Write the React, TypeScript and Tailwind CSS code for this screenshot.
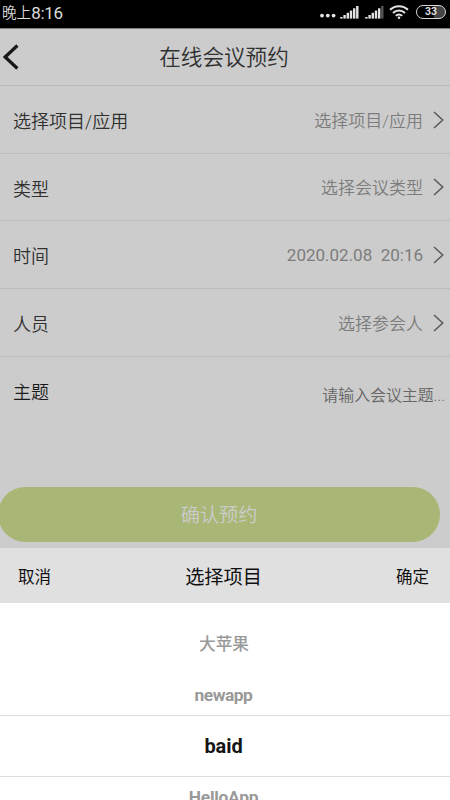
import React from 'react';

interface FieldRow {
    label: string;
    value: string;
    height: string;
}

const rows: FieldRow[] = [
    { label: '选择项目/应用', value: '选择项目/应用', height: 'h-[68px]' },
    { label: '类型', value: '选择会议类型', height: 'h-[67px]' },
    { label: '时间', value: '2020.02.08\u00a0 20:16', height: 'h-[68px]' },
    { label: '人员', value: '选择参会人', height: 'h-[68px]' },
];

const Signal: React.FC<{ weak?: boolean }> = ({ weak = false }) => (
    <svg width="19" height="14" viewBox="0 0 19 14" fill="#e4e4e4">
        <rect x="0.2" y="12" width="2.4" height="1.6" />
        <rect x="3.4" y="10" width="2.4" height="3.6" />
        <rect x="6.6" y="7.8" width="2.4" height="5.8" />
        <rect x="9.8" y="5.6" width="2.4" height="8" />
        <rect x="13" y="3.3" width="2.4" height="10.3" />
        <rect x="16.1" y="1" width="2.4" height="12.6" fill={weak ? '#555555' : '#e4e4e4'} />
    </svg>
);

const StatusBar: React.FC = () => (
    <div className="h-7 shrink-0 bg-black flex items-center justify-between pl-[2px] pr-[4px] text-[#dcdcdc]">
        <span className="text-[14.6px] leading-none pb-[2px] flex items-center font-[350]">
            晚上<span className="text-[17px] tracking-[-0.3px] font-normal">8:16</span>
        </span>
        <div className="flex items-center pb-[4px]">
            <svg width="16" height="14" viewBox="0 0 16 14" fill="#e4e4e4">
                <circle cx="2" cy="10.6" r="1.9" />
                <circle cx="7.8" cy="10.6" r="1.9" />
                <circle cx="13.6" cy="10.6" r="1.9" />
            </svg>
            <span className="ml-[4px]"><Signal /></span>
            <span className="ml-[6px]"><Signal weak /></span>
            <svg className="ml-[5px]" width="20" height="14" viewBox="0 0 20 14" fill="none" stroke="#e4e4e4" strokeWidth="2">
                <path d="M1 4.8a13 13 0 0 1 18 0" />
                <path d="M4 8a8.6 8.6 0 0 1 12 0" />
                <path d="M6.8 10.9a4.6 4.6 0 0 1 6.4 0" />
                <circle cx="10" cy="12.7" r="1.3" fill="#e4e4e4" stroke="none" />
            </svg>
            <div className="ml-[7px] w-[30px] h-[14px] rounded-full border-[1.5px] border-[#d8d8d8] bg-[linear-gradient(90deg,#000_62%,#454545_62%)] flex items-center justify-center pt-px text-[10.5px] leading-none font-bold">
                33
            </div>
        </div>
    </div>
);

const Chevron: React.FC = () => (
    <svg className="shrink-0" width="11" height="18" viewBox="0 0 11 18" fill="none" stroke="#5c5c5c" strokeWidth="1.6">
        <path d="M1 1l8.7 8L1 17" />
    </svg>
);

export default function App() {
    return (
        <div className="w-[450px] h-[800px] overflow-hidden flex flex-col bg-[#cccccc] font-['Roboto','Noto_Sans_CJK_SC',sans-serif]">
            <StatusBar />

            <header className="h-[58px] shrink-0 border-t border-t-[#808080] border-b border-b-[#bababa] grid grid-cols-[40px_1fr_42px] items-center">
                <svg className="ml-[3px]" width="17" height="26" viewBox="0 0 17 26" fill="none" stroke="#181818" strokeWidth="3.2">
                    <path d="M14.4 1.5L2.2 13L14.4 24.5" />
                </svg>
                <h1 className="pt-px text-center text-[21.6px] leading-none font-[350] text-[#303030]">在线会议预约</h1>
            </header>

            {rows.map((row) => (
                <div key={row.label} className={`${row.height} shrink-0 border-b border-[#bdbdbd] flex items-center pl-[13px] pr-[6px]`}>
                    <span className="pt-[4px] text-[18px] font-[350] text-[#303030]">{row.label}</span>
                    <span className={`ml-auto mr-[10px] text-[17px] text-[#7c7c7c] ${row.label === '时间' ? 'pt-[2px] font-normal' : 'pt-[4px] font-[350]'}`}>
                        {row.value}
                    </span>
                    <Chevron />
                </div>
            ))}

            <div className="h-[130px] shrink-0 flex items-start justify-between pl-[13px] pr-[5px]">
                <span className="mt-[22px] text-[18px] text-[#1c1c1c] font-[350]">主题</span>
                <span className="mt-[27px] text-[15.9px] text-[#666666] font-[350]">请输入会议主题...</span>
            </div>

            <button className="-ml-[2px] pt-[4px] w-[442px] h-[55px] shrink-0 rounded-full bg-[#a9b776] text-[19.2px] font-[350] text-[#cccccc]">
                确认预约
            </button>

            <section className="mt-[6px] flex-1 min-h-0 flex flex-col bg-white">
                <div className="h-[55px] shrink-0 bg-[#e0e0e0] grid grid-cols-[1fr_auto_1fr] items-center pt-[5px] pl-[18px] pr-[21px] text-[#101010]">
                    <span className="text-[16.5px]">取消</span>
                    <h2 className="text-[19.2px]">选择项目</h2>
                    <span className="text-[16.5px] text-right">确定</span>
                </div>
                <ul className="flex flex-col text-center font-bold text-[17.4px] tracking-[-0.5px] text-[#999999]">
                    <li className="h-[61px] pt-[22px] pr-[2px] leading-[40px] font-medium text-[16.7px] tracking-normal">大苹果</li>
                    <li className="h-[51px] pr-[3px] leading-[63px]">newapp</li>
                    <li className="h-[62px] pr-[3px] border-y border-[#dedede] text-[#151515] text-[20px] tracking-[-0.1px] leading-[61px]">baid</li>
                    <li className="pr-[3px] leading-[40px] tracking-[-0.3px]">HelloApp</li>
                </ul>
            </section>
        </div>
    );
}
